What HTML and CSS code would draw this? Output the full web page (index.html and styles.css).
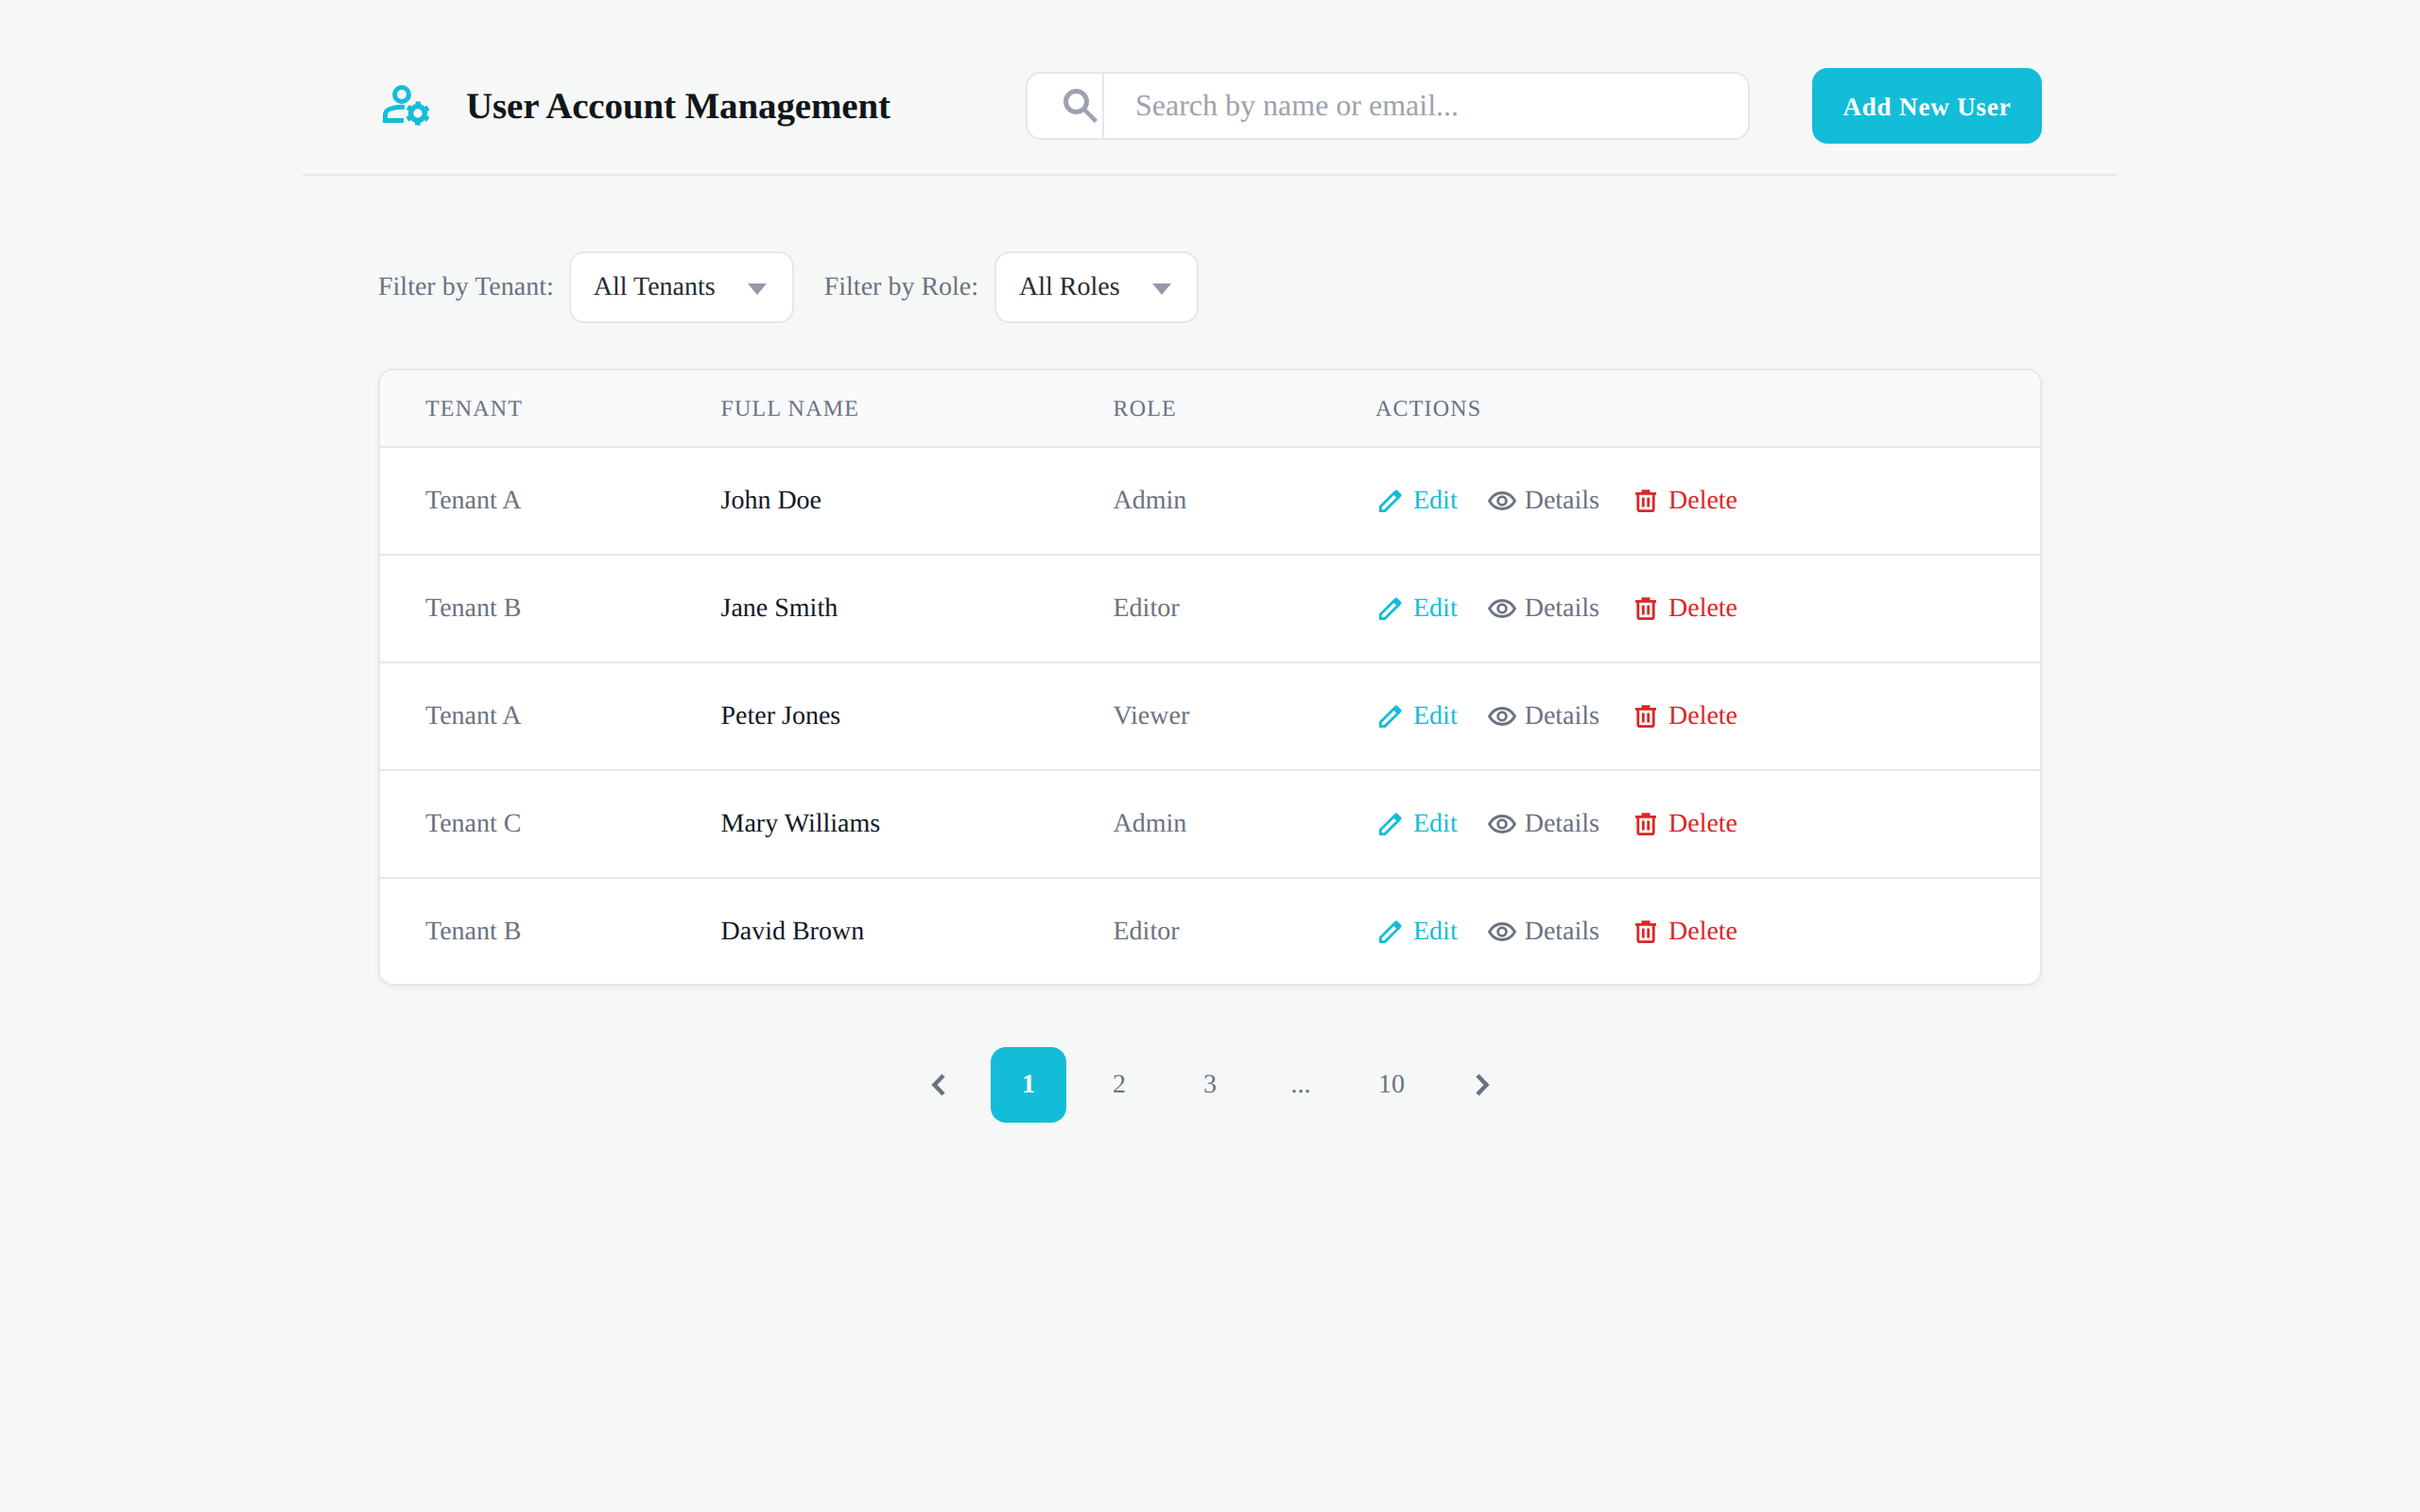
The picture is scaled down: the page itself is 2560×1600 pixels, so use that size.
FILE: index.html
```html
<!DOCTYPE html>
<html lang="en">
<head>
<meta charset="utf-8">
<title>User Account Management</title>
<link rel="stylesheet" href="styles.css">
</head>
<body>
<svg class="defs" aria-hidden="true">
  <defs>
    <symbol id="i-edit" viewBox="0 0 24 24"><path d="M1.400 22.600V18L15.500 3.900 20.100 8.500 6 22.600Z" fill="none" stroke="currentColor" stroke-width="2.800"/><path d="M14.500 3 17 .7Q18 0 19 .7L23.300 5Q24 6 23.300 7L21 9.500Z" fill="currentColor"/></symbol>
    <symbol id="i-eye" viewBox="0 0 30 20"><path d="M1.500 10C4.700 4.500 9.300 1.500 15 1.500S25.300 4.500 28.500 10C25.300 15.500 20.700 18.500 15 18.500S4.700 15.500 1.500 10Z" fill="none" stroke="currentColor" stroke-width="2.800"/><circle cx="15" cy="10" r="4.400" fill="none" stroke="currentColor" stroke-width="2.800"/></symbol>
    <symbol id="i-trash" viewBox="0 0 22 24"><path d="M0 3H22V5.800H0ZM6.500 .3H15.500V3.500H6.500Z" fill="currentColor"/><path d="M2.800 4.500V21C2.800 22 3.500 22.700 4.500 22.700H17.500C18.500 22.700 19.200 22 19.200 21V4.500" fill="none" stroke="currentColor" stroke-width="2.800"/><path d="M8.300 8.500V18.500M13.700 8.500V18.500" stroke="currentColor" stroke-width="2.800"/></symbol>
  </defs>
</svg>
<div class="app">
  <header class="topbar">
    <div class="brand">
      <svg class="brand-icon" viewBox="0 0 56 48" aria-hidden="true">
        <circle cx="23" cy="12" r="7.500" fill="none" stroke="#14bdd8" stroke-width="5"/>
        <path d="M26 25.500C14 24.500 5.500 28 5.500 33V39.500H25" fill="none" stroke="#14bdd8" stroke-width="5"/>
        <g fill="none" stroke="#14bdd8">
          <circle cx="40" cy="32" r="7.500" stroke-width="5.500"/>
          <circle cx="40" cy="32" r="11" stroke-width="3.500" stroke-dasharray="5.500 6.020" stroke-dashoffset="-3"/>
        </g>
      </svg>
      <h1 class="title">User Account Management</h1>
    </div>
    <div class="search">
      <span class="search-icon">
        <svg viewBox="0 0 36 36" aria-hidden="true"><circle cx="13.500" cy="13.500" r="11" fill="none" stroke="#9ca3af" stroke-width="5"/><path d="M21 21 34.500 34.500" stroke="#9ca3af" stroke-width="4.500"/></svg>
      </span>
      <input class="search-input" type="text" placeholder="Search by name or email...">
    </div>
    <button class="add-btn" type="button">Add New User</button>
  </header>

  <main class="content">
    <div class="filters">
      <label class="filter-label filter-label-tenant">Filter by Tenant:</label>
      <div class="select select-tenant"><span>All Tenants</span><i class="caret"></i></div>
      <label class="filter-label filter-label-role">Filter by Role:</label>
      <div class="select select-role"><span>All Roles</span><i class="caret"></i></div>
    </div>

    <div class="table-card">
      <table class="users">
        <colgroup><col class="c1"><col class="c2"><col class="c3"><col class="c4"></colgroup>
        <thead>
          <tr><th>Tenant</th><th>Full Name</th><th>Role</th><th>Actions</th></tr>
        </thead>
        <tbody>
          <tr><td>Tenant A</td><td class="name">John Doe</td><td>Admin</td><td><div class="actions"><a class="act edit"><svg class="ic-edit"><use href="#i-edit"/></svg>Edit</a><a class="act view"><svg class="ic-eye"><use href="#i-eye"/></svg>Details</a><a class="act del"><svg class="ic-trash"><use href="#i-trash"/></svg>Delete</a></div></td></tr>
          <tr><td>Tenant B</td><td class="name">Jane Smith</td><td>Editor</td><td><div class="actions"><a class="act edit"><svg class="ic-edit"><use href="#i-edit"/></svg>Edit</a><a class="act view"><svg class="ic-eye"><use href="#i-eye"/></svg>Details</a><a class="act del"><svg class="ic-trash"><use href="#i-trash"/></svg>Delete</a></div></td></tr>
          <tr><td>Tenant A</td><td class="name">Peter Jones</td><td>Viewer</td><td><div class="actions"><a class="act edit"><svg class="ic-edit"><use href="#i-edit"/></svg>Edit</a><a class="act view"><svg class="ic-eye"><use href="#i-eye"/></svg>Details</a><a class="act del"><svg class="ic-trash"><use href="#i-trash"/></svg>Delete</a></div></td></tr>
          <tr><td>Tenant C</td><td class="name">Mary Williams</td><td>Admin</td><td><div class="actions"><a class="act edit"><svg class="ic-edit"><use href="#i-edit"/></svg>Edit</a><a class="act view"><svg class="ic-eye"><use href="#i-eye"/></svg>Details</a><a class="act del"><svg class="ic-trash"><use href="#i-trash"/></svg>Delete</a></div></td></tr>
          <tr><td>Tenant B</td><td class="name">David Brown</td><td>Editor</td><td><div class="actions"><a class="act edit"><svg class="ic-edit"><use href="#i-edit"/></svg>Edit</a><a class="act view"><svg class="ic-eye"><use href="#i-eye"/></svg>Details</a><a class="act del"><svg class="ic-trash"><use href="#i-trash"/></svg>Delete</a></div></td></tr>
        </tbody>
      </table>
    </div>

    <nav class="pager">
      <a class="page"><svg class="chev" viewBox="0 0 15 24" aria-hidden="true"><path d="M13 2 3.500 12 13 22" fill="none" stroke="#6b7280" stroke-width="4.500"/></svg></a>
      <a class="page current">1</a>
      <a class="page">2</a>
      <a class="page">3</a>
      <a class="page">...</a>
      <a class="page">10</a>
      <a class="page"><svg class="chev" viewBox="0 0 15 24" aria-hidden="true"><path d="M2 2 11.500 12 2 22" fill="none" stroke="#6b7280" stroke-width="4.500"/></svg></a>
    </nav>
  </main>
</div>
</body>
</html>
```
FILE: styles.css
```css
* { box-sizing: border-box; }
html, body { margin: 0; height: 100%; }
body {
  background: #f6f8f8;
  font-family: "Liberation Serif", "Times New Roman", serif;
  color: #111827;
  min-height: 1600px;
  text-rendering: geometricPrecision;
}
.defs { display: none; }
.app { width: 1920px; margin: 0 auto; }

.topbar {
  height: 186px;
  padding: 40px 80px 0;
  border-bottom: 2px solid #e5e7eb;
  display: flex;
  align-items: center;
}
.brand { display: flex; align-items: center; width: 685px; flex: none; }
.brand-icon { width: 56px; height: 48px; margin-left: 2px; margin-right: 35px; flex: none; }
.title { margin: 2px 0 0; font-size: 39px; font-weight: 700; color: #111618; line-height: 48px; white-space: nowrap; letter-spacing: -.14px; }

.search {
  width: 766px; height: 72px; flex: none;
  background: #fff;
  border: 2px solid #e5e7eb;
  border-radius: 16px;
  display: flex;
  align-items: stretch;
}
.search-icon { width: 81px; flex: none; border-right: 2px solid #e5e7eb; display: flex; align-items: center; justify-content: flex-end; padding-right: 5px; }
.search-icon svg { width: 36px; height: 36px; }
.search-input {
  flex: 1; min-width: 0; border: 0; outline: 0; background: transparent;
  padding: 0 32px 2px 33px;
  font-family: inherit; font-size: 32px; color: #111827;
  text-rendering: geometricPrecision;
}
.search-input::placeholder { color: #9ca3af; opacity: 1; }

.add-btn {
  margin-left: 66px;
  padding: 2px 0 0;
  width: 243px; height: 80px; flex: none;
  background: #13bdd8;
  color: #fff;
  border: 0; border-radius: 16px;
  font-family: inherit; font-size: 27px; font-weight: 700; letter-spacing: .85px;
  text-rendering: geometricPrecision;
}

.content { padding: 0 80px; }

.filters { display: flex; align-items: center; margin-top: 80px; height: 76px; }
.filter-label { font-size: 28px; color: #6b7280; }
.filter-label-role { margin-left: 32px; }
.select {
  margin-left: 16px;
  height: 76px;
  background: #fff;
  border: 2px solid #e5e7eb;
  border-radius: 16px;
  display: flex; align-items: center; justify-content: space-between;
  padding: 0 27px 0 24px;
  font-size: 28px; color: #262b36;
}
.select-tenant { width: 238px; }
.select-role { width: 216px; margin-left: 17px; }
.caret {
  width: 0; height: 0;
  border-left: 10.5px solid transparent;
  border-right: 10.5px solid transparent;
  border-top: 12px solid #959aa8;
  margin-top: 3px;
}

.table-card {
  margin-top: 48px;
  background: #fff;
  border: 2px solid #e5e7eb;
  border-radius: 16px;
  overflow: hidden;
  box-shadow: 0 2px 6px rgba(0,0,0,.05);
}
.users { width: 100%; border-collapse: collapse; table-layout: fixed; }
.c1 { width: 312.5px; } .c2 { width: 415px; } .c3 { width: 277.5px; }
.users th {
  height: 81px;
  padding: 2px 0 0 48px;
  background: #f9fafb;
  text-align: left;
  font-size: 24px; font-weight: 400;
  letter-spacing: 1.2px;
  text-transform: uppercase;
  color: #6b7280;
  border-bottom: 2px solid #e5e7eb;
}
.users td {
  height: 114px;
  padding: 0 0 0 48px;
  font-size: 28px;
  color: #6b7280;
  border-bottom: 2px solid #e5e7eb;
}
.users tbody tr:last-child td { border-bottom: 0; height: 112px; }
.users td.name { color: #111827; }
.actions { display: flex; align-items: center; gap: 32px; }
.act { display: inline-flex; align-items: center; gap: 12px; }
.act svg { flex: none; }
.edit { color: #13bdd8; }
.view { color: #6b7280; gap: 9px; }
.del { color: #dc2626; gap: 13px; margin-left: 6px; }
.ic-edit { width: 24px; height: 24px; margin-left: 4px; }
.ic-eye { width: 30px; height: 20px; }
.ic-trash { width: 22px; height: 24px; }

.pager { display: flex; justify-content: center; gap: 16px; margin-top: 65px; }
.page {
  width: 80px; height: 80px;
  display: flex; align-items: center; justify-content: center;
  border-radius: 16px;
  font-size: 28px; color: #6b7280;
}
.page.current { background: #13bdd8; color: #fff; font-weight: 700; }
.chev { width: 15px; height: 24px; }
```
